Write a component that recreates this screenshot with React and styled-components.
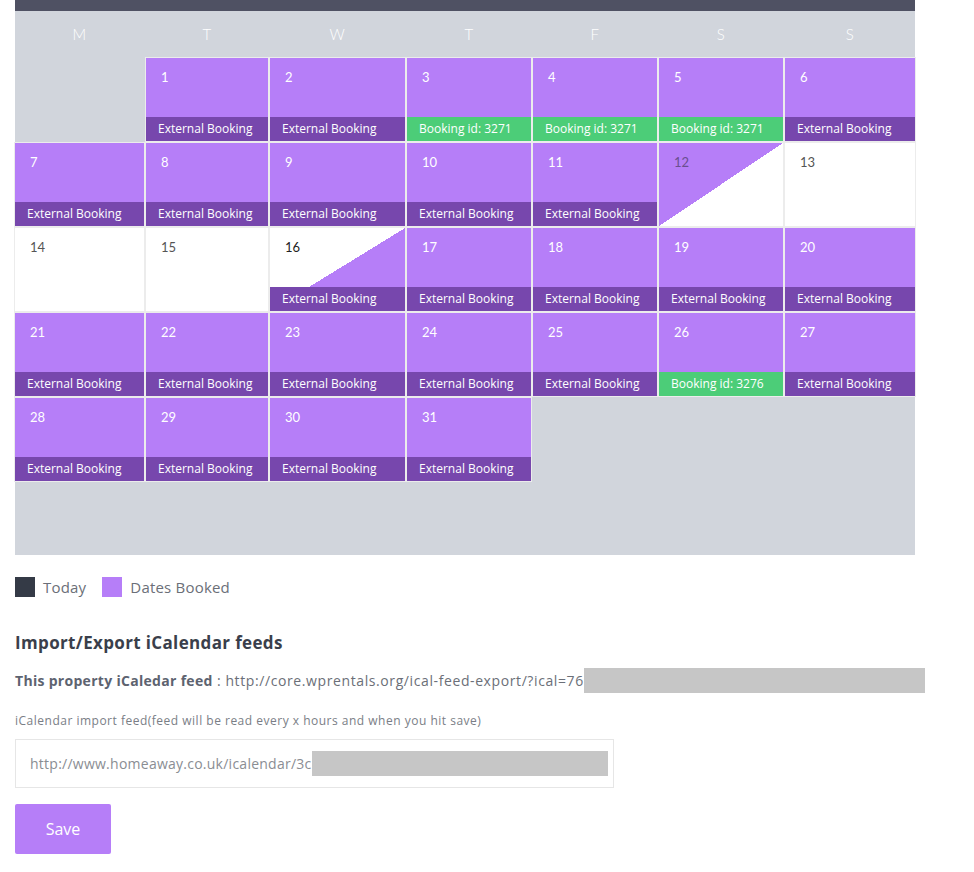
import React from 'react'
import styled, { createGlobalStyle } from 'styled-components'

const Global = createGlobalStyle`
  body {
    margin: 0;
    background: #fff;
    font-family: Lato, "Open Sans", sans-serif;
  }
`

const PURPLE = '#b67ef8'
const DARK_PURPLE = '#7747ad'
const GREEN = '#4ccd78'
const LINE = '#ececec'

const days = ['M', 'T', 'W', 'T', 'F', 'S', 'S']

// kind: full | free | startHalf | endHalf
const cells = [
  null,
  { n: 1, label: 'External Booking' },
  { n: 2, label: 'External Booking' },
  { n: 3, label: 'Booking id: 3271', green: true },
  { n: 4, label: 'Booking id: 3271', green: true },
  { n: 5, label: 'Booking id: 3271', green: true },
  { n: 6, label: 'External Booking' },
  { n: 7, label: 'External Booking' },
  { n: 8, label: 'External Booking' },
  { n: 9, label: 'External Booking' },
  { n: 10, label: 'External Booking' },
  { n: 11, label: 'External Booking' },
  { n: 12, kind: 'endHalf' },
  { n: 13, kind: 'free' },
  { n: 14, kind: 'free' },
  { n: 15, kind: 'free' },
  { n: 16, kind: 'startHalf', label: 'External Booking' },
  { n: 17, label: 'External Booking' },
  { n: 18, label: 'External Booking' },
  { n: 19, label: 'External Booking' },
  { n: 20, label: 'External Booking' },
  { n: 21, label: 'External Booking' },
  { n: 22, label: 'External Booking' },
  { n: 23, label: 'External Booking' },
  { n: 24, label: 'External Booking' },
  { n: 25, label: 'External Booking' },
  { n: 26, label: 'Booking id: 3276', green: true },
  { n: 27, label: 'External Booking' },
  { n: 28, label: 'External Booking' },
  { n: 29, label: 'External Booking' },
  { n: 30, label: 'External Booking' },
  { n: 31, label: 'External Booking' },
]

const backgrounds = {
  full: PURPLE,
  free: '#fff',
  endHalf: `linear-gradient(to bottom right, ${PURPLE} 50%, #fff 50%)`,
  startHalf: `linear-gradient(to bottom right, #fff 50%, ${PURPLE} 50%)`,
}

const numberColors = {
  full: '#fff',
  free: '#555',
  endHalf: '#6a4f90',
  startHalf: '#222',
}

const App = () => {
  return (
    <Page>
      <Global />
      <Calendar>
        <TopBar />
        <WeekHeader>
          {days.map((d, i) => (
            <WeekDay key={i}>{d}</WeekDay>
          ))}
        </WeekHeader>
        <Grid>
          {cells.map((c, i) => {
            if (!c) return <Blank key={i} />
            const kind = c.kind || 'full'
            return (
              <Day key={i} $bg={backgrounds[kind]}>
                <DayNumber $color={numberColors[kind]}>{c.n}</DayNumber>
                {c.label && <DayLabel $green={c.green}>{c.label}</DayLabel>}
              </Day>
            )
          })}
        </Grid>
      </Calendar>

      <Legend>
        <Swatch $color="#343a46" />
        <LegendText>Today</LegendText>
        <Swatch $color={PURPLE} />
        <LegendText>Dates Booked</LegendText>
      </Legend>

      <Title>Import/Export iCalendar feeds</Title>

      <FeedLine>
        <strong>This property iCaledar feed</strong> : http://core.wprentals.org/ical-feed-export/?ical=76
        <Redacted $width={341} $height={25} />
      </FeedLine>

      <SmallLabel>iCalendar import feed(feed will be read every x hours and when you hit save)</SmallLabel>

      <InputBox>
        http://www.homeaway.co.uk/icalendar/3c
        <Redacted $width={296} $height={25} />
      </InputBox>

      <SaveButton type="button">Save</SaveButton>
    </Page>
  )
}

const Page = styled.div`
  padding: 0 15px 20px;
`

const Calendar = styled.div`
  width: 900px;
  background: #d1d5dc;
  padding-bottom: 74px;
`

const TopBar = styled.div`
  height: 11px;
  background: #4f5163;
`

const COLS = '129px 122px 135px 124px 124px 124px 130px'

const WeekHeader = styled.div`
  display: grid;
  grid-template-columns: ${COLS};
  column-gap: 2px;
  height: 46px;
  align-items: center;
`

const WeekDay = styled.div`
  text-align: center;
  color: #fff;
  font-size: 15px;
  font-weight: 300;
  letter-spacing: 0.5px;
`

const Grid = styled.div`
  display: grid;
  grid-template-columns: ${COLS};
  grid-auto-rows: 83px;
  gap: 2px;
  padding-top: 1px;
`

const Blank = styled.div``

const Day = styled.div`
  display: flex;
  flex-direction: column;
  justify-content: space-between;
  background: ${(p) => p.$bg};
  box-shadow: 0 0 0 1px ${LINE};
`

const DayNumber = styled.div`
  padding: 11px 0 0 15px;
  font-size: 13px;
  color: ${(p) => p.$color};
`

const DayLabel = styled.div`
  height: 24px;
  line-height: 24px;
  padding-left: 12px;
  font-family: "Open Sans", "Noto Sans", sans-serif;
  font-size: 12px;
  color: #fff;
  background: ${(p) => (p.$green ? GREEN : DARK_PURPLE)};
  white-space: nowrap;
`

const Legend = styled.div`
  display: flex;
  align-items: center;
  margin-top: 22px;
  height: 20px;
`

const Swatch = styled.span`
  width: 20px;
  height: 20px;
  background: ${(p) => p.$color};
  margin-right: 8px;
`

const LegendText = styled.span`
  font-family: "Open Sans", sans-serif;
  font-size: 15px;
  letter-spacing: 0.2px;
  color: #6b6f78;
  margin-right: 16px;
`

const Title = styled.h3`
  margin: 34px 0 0;
  font-family: "Open Sans", sans-serif;
  font-size: 17px;
  font-weight: 700;
  letter-spacing: 0.35px;
  color: #3a3f4b;
`

const FeedLine = styled.div`
  display: flex;
  align-items: center;
  margin-top: 14px;
  font-family: "Open Sans", sans-serif;
  font-size: 14px;
  letter-spacing: 0.6px;
  color: #6b6f78;
  white-space: pre;

  strong {
    color: #5d6370;
    letter-spacing: 0.3px;
  }
`

const Redacted = styled.span`
  display: inline-block;
  width: ${(p) => p.$width}px;
  height: ${(p) => p.$height}px;
  background: #c6c6c6;
`

const SmallLabel = styled.div`
  margin-top: 19px;
  font-family: "Open Sans", sans-serif;
  font-size: 12px;
  letter-spacing: 0.5px;
  color: #7a7e86;
`

const InputBox = styled.div`
  display: flex;
  align-items: center;
  width: 599px;
  height: 49px;
  margin-top: 10px;
  box-sizing: border-box;
  padding-left: 14px;
  border: 1px solid #e6e6e6;
  font-family: "Open Sans", sans-serif;
  font-size: 14px;
  letter-spacing: 0.25px;
  color: #8a8d93;
`

const SaveButton = styled.button`
  display: block;
  margin-top: 16px;
  width: 96px;
  height: 50px;
  border: none;
  border-radius: 2px;
  background: ${PURPLE};
  color: #fff;
  font-family: "Open Sans", sans-serif;
  font-size: 16px;
`

export default App
